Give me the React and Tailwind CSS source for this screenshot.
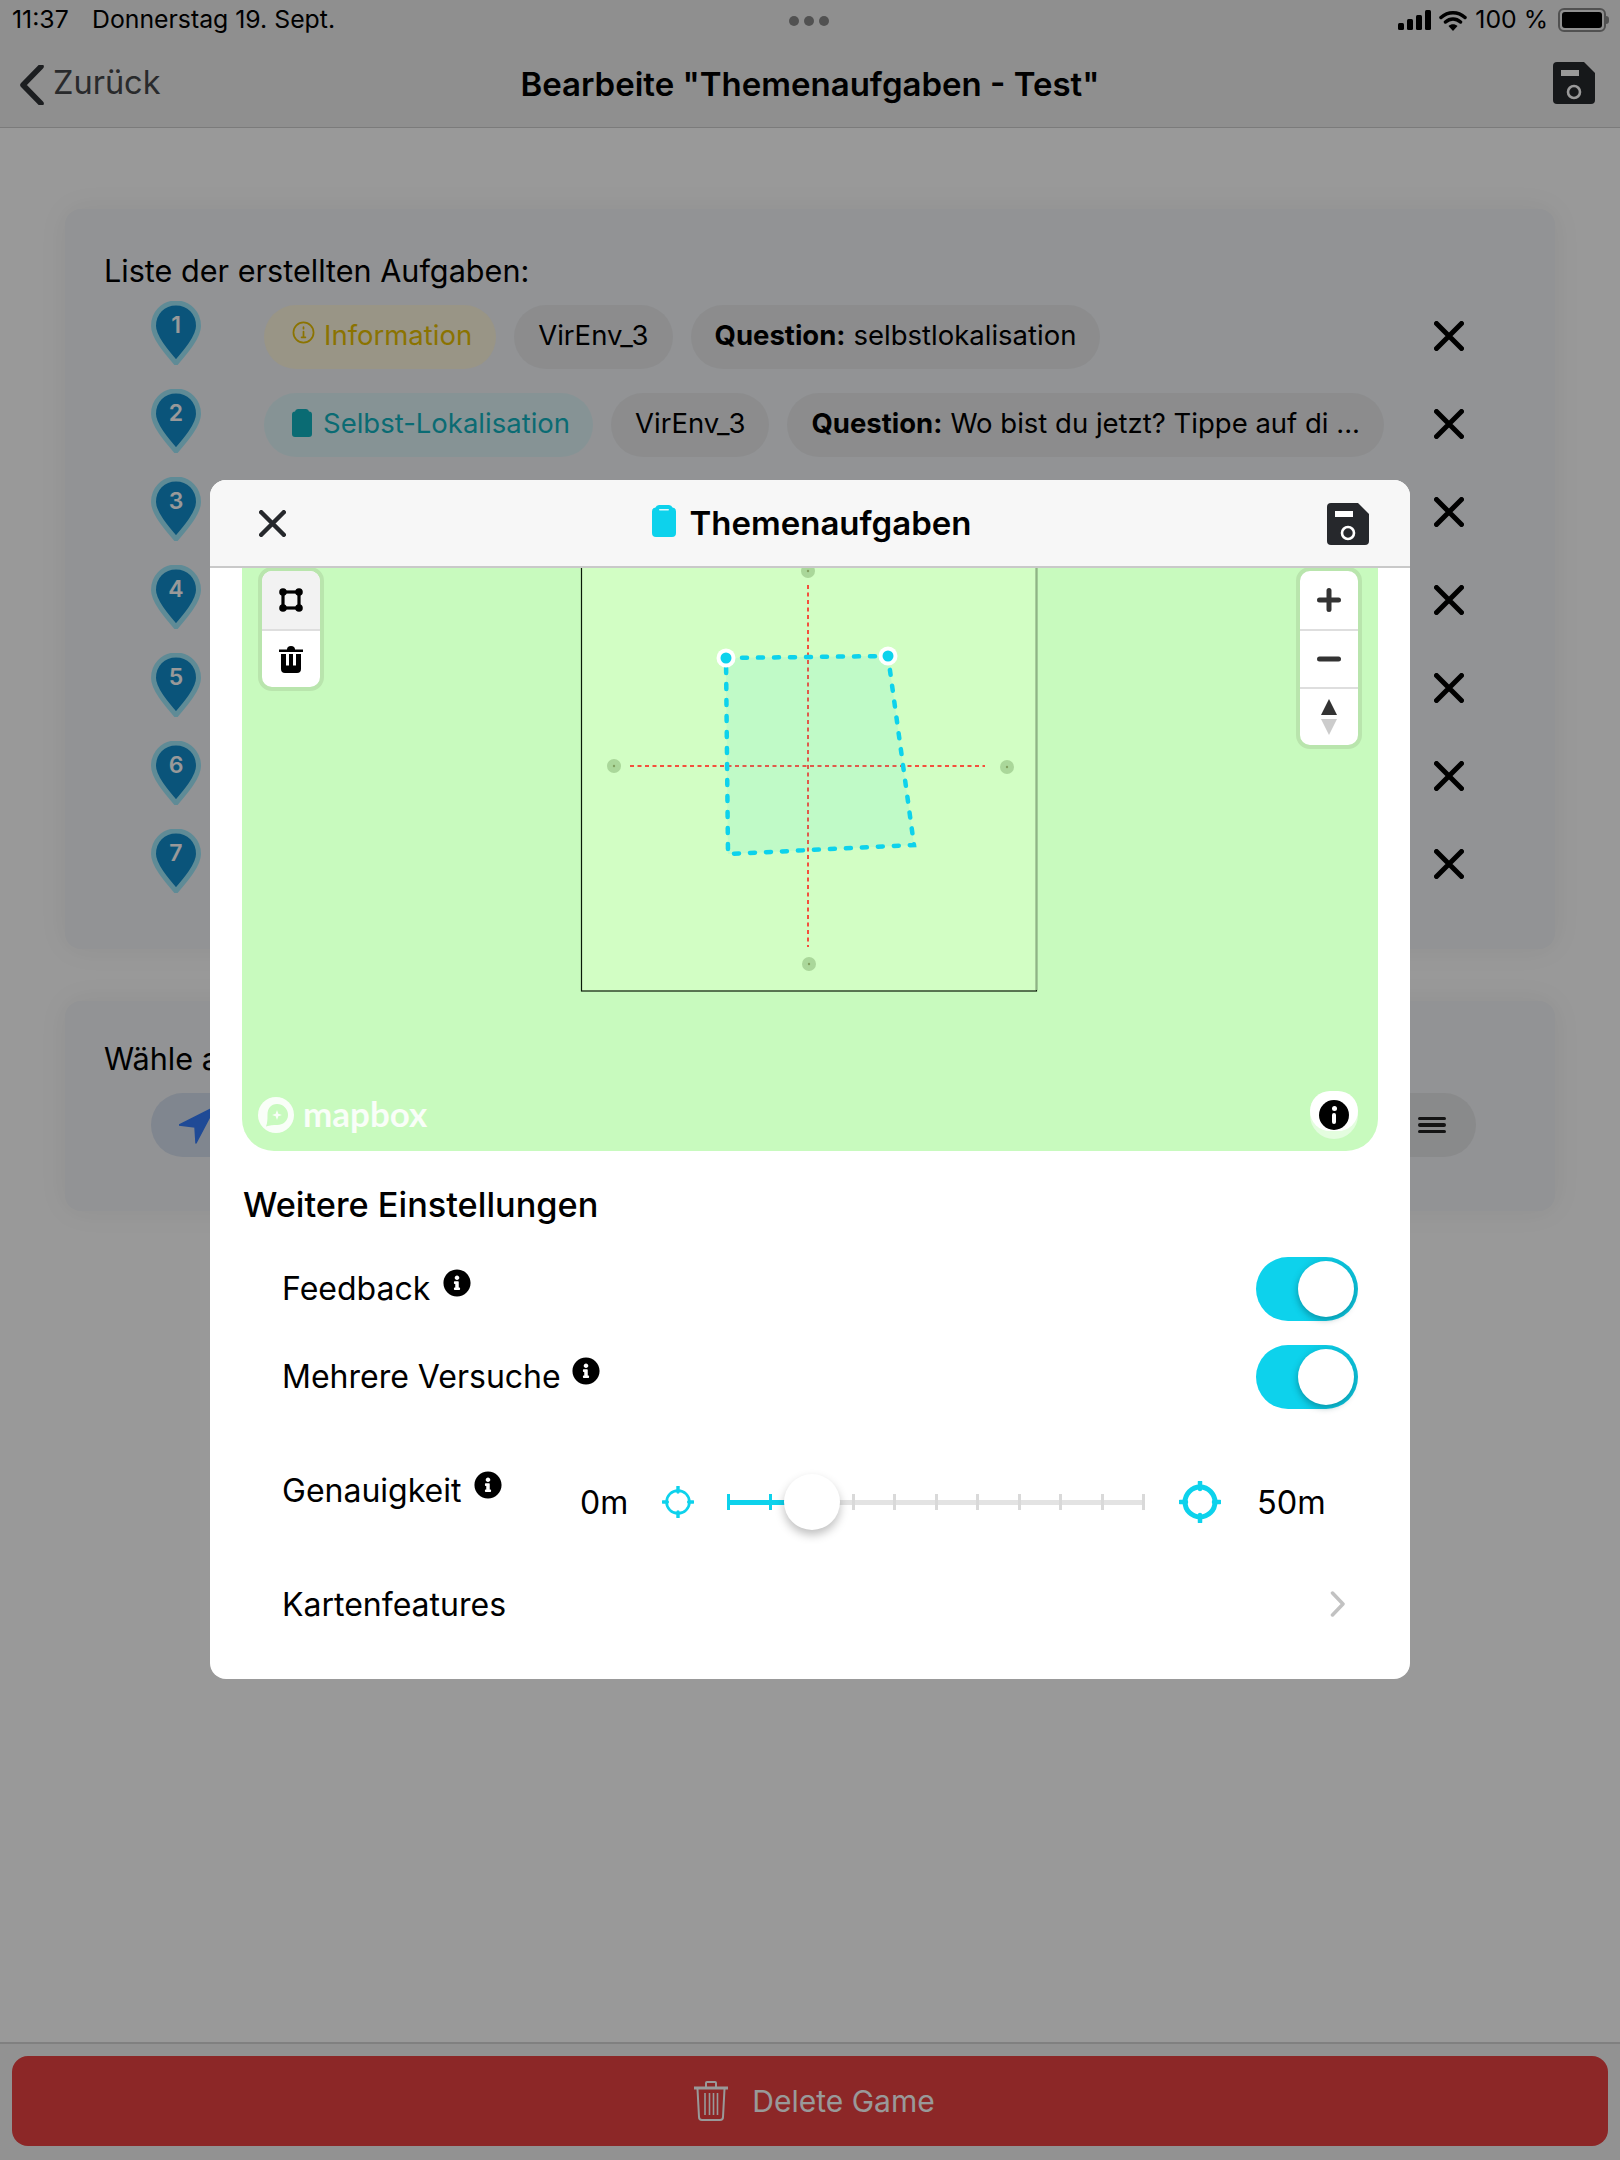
import { FaInfoCircle } from "react-icons/fa"

const font = "font-['Inter',sans-serif]"

function SaveIcon({ className }) {
  return (
    <svg viewBox="0 0 42 42" className={className}>
      <path d="M4 0H31L42 11V38a4 4 0 0 1-4 4H4a4 4 0 0 1-4-4V4a4 4 0 0 1 4-4Z" fill="currentColor" />
      <rect x="8" y="8" width="18" height="6" fill="#fff" />
      <circle cx="21" cy="30" r="6" fill="none" stroke="#fff" strokeWidth="2.6" />
    </svg>
  )
}

function ClipIcon({ color }) {
  return (
    <svg viewBox="0 0 24 32" className="w-6 h-8">
      <path d="M7 0h10a4 4 0 0 1 3.500 2.500A4 4 0 0 1 24 6.500V28a4 4 0 0 1-4 4H4a4 4 0 0 1-4-4V6.500A4 4 0 0 1 3.500 2.500 4 4 0 0 1 7 0Z" fill={color} />
      <rect x="7" y="4" width="10" height="1.600" rx="0.800" fill="#fff" opacity="0.85" />
    </svg>
  )
}

function CloseIcon({ className, stroke = "currentColor" }) {
  return (
    <svg viewBox="0 0 30 30" className={className}>
      <path d="M2.500 2.500L27.500 27.500M27.500 2.500L2.500 27.500" stroke={stroke} strokeWidth="5" strokeLinecap="round" />
    </svg>
  )
}

function Pin({ n }) {
  return (
    <div className="relative w-[50px] h-16 -mt-2 shrink-0">
      <svg viewBox="0 0 50 64" className="w-[50px] h-16">
        <path d="M25 2C12 2 2.500 12 2.500 25c0 11 13 26 22.500 37C34.500 51 47.500 36 47.500 25 47.500 12 38 2 25 2Z" fill="#118dcc" stroke="#9fe8fb" strokeWidth="5" strokeLinejoin="round" />
      </svg>
      <span className="absolute inset-x-0 top-[10px] text-center text-[23px] leading-7 font-semibold text-white">{n}</span>
    </div>
  )
}

function Chip({ children, className = "" }) {
  return (
    <div className={`h-16 rounded-full flex items-center text-[27.500px] whitespace-nowrap ${className}`}>
      {children}
    </div>
  )
}

function TaskRow({ n, children }) {
  return (
    <div className="h-[88px] flex items-center">
      <div className="ml-[86px] mr-[63px]">
        <Pin n={n} />
      </div>
      <div className="flex gap-[18px]">{children}</div>
      <CloseIcon className="w-[30px] h-[30px] ml-auto mr-[91px] -mt-[3px]" stroke="#000" />
    </div>
  )
}

function Toggle() {
  return (
    <div className="relative w-[102px] h-16 rounded-full bg-[linear-gradient(90deg,#0dd2ec_45%,#0cbcd4)]">
      <div className="absolute right-1 top-1 w-14 h-14 rounded-full bg-white shadow-[-1px_3px_6px_rgba(0,60,70,0.35)]" />
    </div>
  )
}

function Target({ size, weight }) {
  return (
    <svg viewBox="0 0 42 42" style={{ width: size, height: size }}>
      <circle cx="21" cy="21" r="15" fill="none" stroke="#0dd2ec" strokeWidth={weight} />
      <path d="M21 1V8M21 34V41M1 21H7M35 21H41" stroke="#0dd2ec" strokeWidth="4.500" strokeLinecap="round" />
    </svg>
  )
}

function SettingRow({ label, mt, gap }) {
  return (
    <div className={`h-16 flex items-center pl-[72px] pr-[52px] ${mt}`}>
      <span className="text-[32px]">{label}</span>
      <FaInfoCircle className={`w-[28px] h-[28px] -mt-[12px] text-black ${gap}`} />
      <div className="ml-auto">
        <Toggle />
      </div>
    </div>
  )
}

function MapControl({ className, children }) {
  return (
    <div className={`absolute top-[-1px] w-[66px] rounded-[14px] border-4 border-[#b9e5ad] bg-white overflow-hidden flex flex-col ${className}`}>
      {children}
    </div>
  )
}

function ControlButton({ children, className = "" }) {
  return <div className={`h-[58px] first:h-[60px] last:h-[56px] flex items-center justify-center border-b-2 border-[#dedede] last:border-b-0 ${className}`}>{children}</div>
}

function MapView() {
  return (
    <div className="relative mx-8 h-[583px] rounded-b-[32px] overflow-hidden bg-[#c8fabe]">
      <svg viewBox="242 568 1136 583" className="absolute inset-0 w-full h-full">
        <rect x="581.500" y="560" width="455" height="431" fill="#d2fec4" stroke="#0a1a08" strokeWidth="1.200" />
        <path d="M1036.500 568V990" stroke="#8fb486" strokeWidth="2" />
        <g fill="#aad79a">
          <circle cx="808" cy="571" r="7" />
          <circle cx="614" cy="766" r="7" />
          <circle cx="1007" cy="767" r="7" />
          <circle cx="809" cy="964" r="7" />
        </g>
        <g fill="#80a060">
          <circle cx="808" cy="571" r="1.200" />
          <circle cx="614" cy="766" r="1.200" />
          <circle cx="1007" cy="767" r="1.200" />
          <circle cx="809" cy="964" r="1.200" />
        </g>
        <path d="M630 766H985M808 585V947" stroke="#f4503c" strokeWidth="2" strokeDasharray="4 3.500" />
        <path d="M726 658L888 656L914 845L728 854Z" fill="#0dd2ec" fillOpacity="0.09" />
        <path d="M726 658L888 656L914 845L728 854Z" fill="none" stroke="#0dd2ec" strokeWidth="4.500" strokeDasharray="5 11" strokeLinecap="round" />
        <circle cx="726" cy="658" r="9.500" fill="#fff" />
        <circle cx="726" cy="658" r="5.500" fill="#0dd2ec" />
        <circle cx="888" cy="656" r="9.500" fill="#fff" />
        <circle cx="888" cy="656" r="5.500" fill="#0dd2ec" />
      </svg>

      <MapControl className="left-4">
        <ControlButton className="bg-[#f2f2f2]">
          <svg viewBox="0 0 24 24" className="w-6 h-6">
            <rect x="4" y="4" width="16" height="16" fill="none" stroke="#000" strokeWidth="3.200" />
            <circle cx="4" cy="4" r="3.800" />
            <circle cx="20" cy="4" r="3.800" />
            <circle cx="4" cy="20" r="3.800" />
            <circle cx="20" cy="20" r="3.800" />
          </svg>
        </ControlButton>
        <ControlButton>
          <svg viewBox="0 0 24 28" className="w-6 h-7">
            <path d="M0 4.500H24V7H0ZM8 4.500a4 3.500 0 0 1 8 0Z" />
            <path d="M2 9H22V24a4 4 0 0 1-4 4H6a4 4 0 0 1-4-4ZM7 9V20.500H10V9ZM14 9V20.500H17V9Z" fillRule="evenodd" />
          </svg>
        </ControlButton>
      </MapControl>

      <MapControl className="right-4">
        <ControlButton>
          <svg viewBox="0 0 24 24" className="w-6 h-6">
            <path d="M2.500 12H21.500M12 2.500V21.500" stroke="#333" strokeWidth="5" strokeLinecap="round" />
          </svg>
        </ControlButton>
        <ControlButton>
          <svg viewBox="0 0 24 24" className="w-6 h-6">
            <path d="M2.500 12H21.500" stroke="#333" strokeWidth="5" strokeLinecap="round" />
          </svg>
        </ControlButton>
        <ControlButton>
          <svg viewBox="0 0 16 36" className="w-4 h-9">
            <path d="M8 0L16 16H0Z" fill="#333" />
            <path d="M8 36L16 20H0Z" fill="#ccc" />
          </svg>
        </ControlButton>
      </MapControl>

      <div className="absolute left-4 bottom-[18px] flex items-center gap-[9px] text-white opacity-90">
        <svg viewBox="0 0 36 36" className="w-9 h-9">
          <circle cx="18" cy="18" r="18" fill="#fff" />
          <path d="M19 7a11 11 0 0 1 11 11c0 6-5 10-11 10-3.500 0-7 0-11 1.500 1.500-4 1.500-7 1.500-11.500C9.500 11 13 7 19 7Z" fill="#c8fabe" />
          <path d="M19 13l1.300 3.700L24 18l-3.700 1.300L19 23l-1.300-3.700L14 18l3.700-1.300Z" fill="#fff" />
        </svg>
        <span className="text-[35px] leading-9 font-bold font-['Lato',sans-serif] -mt-1">mapbox</span>
      </div>

      <div className="absolute right-5 bottom-3 w-12 h-12 rounded-full bg-white/50">
        <div className="w-12 h-10 rounded-full bg-white flex justify-center pt-[9px]">
          <div className="w-[30px] h-[30px] shrink-0 rounded-full bg-black flex flex-col items-center justify-center gap-[2px]">
            <div className="w-[5px] h-[5px] rounded-full bg-white" />
            <div className="w-1 h-[11px] rounded-full bg-white" />
          </div>
        </div>
      </div>
    </div>
  )
}

function AccuracyRow() {
  const ticks = [0, 1, 2, 3, 4, 5, 6, 7, 8, 9, 10]
  return (
    <div className="h-16 mt-[61px] flex items-center pl-[72px]">
      <div className="w-[298px] flex items-center -mt-[22px]">
        <span className="text-[32px]">Genauigkeit</span>
        <FaInfoCircle className="w-[28px] h-[28px] ml-[13px] -mt-[12px] text-black" />
      </div>
      <span className="w-[82px] mt-[2px] text-[32px]">0m</span>
      <Target size={32} weight={3.500} />
      <div className="relative w-[418px] h-4 ml-[33px] flex items-center justify-between">
        <div className="absolute inset-x-0 top-[5.500px] h-[5px] bg-[#e3e3e3]" />
        <div className="absolute left-0 w-[85px] top-[5.500px] h-[5px] bg-[#0dd2ec]" />
        {ticks.map((t) => (
          <div key={t} className={`relative w-[3px] h-[16px] ${t < 2 ? "bg-[#0dd2ec]" : "bg-[#d9d9d9]"}`} />
        ))}
        <div className="absolute left-[57px] -top-5 w-14 h-14 rounded-full bg-white shadow-[0_5px_10px_rgba(0,0,0,0.25)]" />
      </div>
      <div className="ml-[34px]">
        <Target size={42} weight={5} />
      </div>
      <span className="ml-[36px] mt-[2px] text-[32.500px]">50m</span>
    </div>
  )
}

function Modal() {
  return (
    <div className="w-[1200px] h-[1199px] rounded-2xl bg-white overflow-hidden text-black">
      <div className="relative h-[88px] bg-[#f7f7f7] border-b-2 border-[#c9c9c9] flex items-center justify-center">
        <CloseIcon className="absolute left-[49px] top-[30px] w-[27px] h-[27px] text-[#26282c]" />
        <div className="-mt-[4px] ml-[3px] flex">
          <ClipIcon color="#0dd2ec" />
        </div>
        <span className="ml-[14px] mt-[2px] text-[33px] font-semibold">Themenaufgaben</span>
        <SaveIcon className="absolute right-[41px] top-[23px] w-[42px] h-[42px] text-[#26282c]" />
      </div>
      <MapView />
      <div className="mt-[33px] pl-[33px] h-[42px] flex items-center text-[34.300px] font-[450]">Weitere Einstellungen</div>
      <SettingRow label="Feedback" mt="mt-[31px]" gap="ml-[13px]" />
      <SettingRow label="Mehrere Versuche" mt="mt-6" gap="ml-[11px]" />
      <AccuracyRow />
      <div className="h-16 mt-[38px] flex items-center justify-between pl-[72px] pr-[64px]">
        <span className="text-[32px] mt-[1px]">Kartenfeatures</span>
        <svg viewBox="0 0 16 26" className="w-4 h-[26px]">
          <path d="M2.500 2L13 13L2.500 24" fill="none" stroke="#c2c2c2" strokeWidth="3.500" strokeLinecap="round" strokeLinejoin="round" />
        </svg>
      </div>
    </div>
  )
}

export default function App() {
  return (
    <div className={`relative w-[1620px] h-[2160px] overflow-hidden flex flex-col bg-white text-black ${font}`}>
      <div className="h-10 shrink-0 flex items-center pl-3 pr-[11px] bg-[#eeeeee] text-[24.800px] relative">
        <span className="w-[60px]">11:37</span>
        <span className="ml-5">Donnerstag 19. Sept.</span>
        <div className="absolute left-[789px] top-4 flex gap-[5px]">
          <div className="w-[10px] h-[10px] rounded-full bg-[#888]" />
          <div className="w-[10px] h-[10px] rounded-full bg-[#888]" />
          <div className="w-[10px] h-[10px] rounded-full bg-[#888]" />
        </div>
        <div className="ml-auto flex items-center gap-[8px]">
          <svg viewBox="0 0 33 20" className="w-[33px] h-5">
            <rect x="0" y="13" width="6" height="7" rx="1.500" />
            <rect x="9" y="9" width="6" height="11" rx="1.500" />
            <rect x="18" y="5" width="6" height="15" rx="1.500" />
            <rect x="27" y="0" width="6" height="20" rx="1.500" />
          </svg>
          <svg viewBox="0 0 28 21" className="w-7 h-[21px]">
            <path d="M2 7.500C9 1 19 1 26 7.500M6.500 12C11 8 17 8 21.500 12" fill="none" stroke="#000" strokeWidth="3.500" strokeLinecap="round" />
            <path d="M14 21L9.500 16C12 13.500 16 13.500 18.500 16Z" />
          </svg>
          <span>100 %</span>
          <div className="flex items-center ml-[2px]">
            <div className="w-12 h-6 rounded-[6px] border-2 border-[#888] p-[2px]">
              <div className="w-full h-full rounded-[3px] bg-black" />
            </div>
            <div className="w-[3px] h-2 rounded-r-full bg-[#888]" />
          </div>
        </div>
      </div>

      <div className="relative h-[88px] shrink-0 bg-[#eeeeee] border-b border-[#cdcdcd] flex items-center justify-center">
        <div className="absolute left-5 top-[22px] flex items-center text-[#45474a]">
          <svg viewBox="0 0 24 40" className="w-6 h-10">
            <path d="M21 1.500L3 20L21 38.500" fill="none" stroke="#303236" strokeWidth="5.500" strokeLinecap="round" strokeLinejoin="round" />
          </svg>
          <span className="ml-[9px] -mt-[3px] text-[32.500px]">Zurück</span>
        </div>
        <span className="mt-[2px] text-[33px] font-semibold">Bearbeite "Themenaufgaben - Test"</span>
        <SaveIcon className="absolute right-[25px] top-[22px] w-[42px] h-[42px] text-[#26282c]" />
      </div>

      <div className="flex-1 px-[65px] pt-[81px] bg-white">
        <div className="h-[740px] rounded-2xl bg-[#f3f5f8] pt-[42px] shadow-[0_0_30px_rgba(0,0,0,0.06)]">
          <div className="ml-[39px] h-[40px] mb-[2px] flex items-center text-[30.600px]">Liste der erstellten Aufgaben:</div>
          <TaskRow n={1}>
            <Chip className="pl-7 pr-[24px] bg-[#fff8e0] text-[#e8c000]">
              <svg viewBox="0 0 24 24" className="w-[23px] h-[23px] mr-[9px] -mt-[9px]" fill="none" stroke="#e8c000" strokeWidth="1.800">
                <circle cx="12" cy="12" r="10.500" />
                <path d="M12 6.500V8M12 11V17M10 17H14" strokeLinecap="round" />
              </svg>
              <span className="-mt-[2px]">Information</span>
            </Chip>
            <Chip className="px-6 bg-[#e9eaec]"><span className="-mt-[2px]">VirEnv_3</span></Chip>
            <Chip className="px-6 bg-[#e9eaec]">
              <b className="font-bold -mt-[2px]">Question:</b>
              <span className="ml-2 -mt-[2px]">selbstlokalisation</span>
            </Chip>
          </TaskRow>
          <TaskRow n={2}>
            <Chip className="pl-7 pr-[23px] bg-[#e0f6f8] text-[#12b3c0]">
              <div className="mr-[11px] -mt-1 flex">
                <svg viewBox="0 0 20 28" className="w-5 h-7">
                  <path d="M6 0h8a3 3 0 0 1 3 2.500a3 3 0 0 1 3 3V25a3 3 0 0 1-3 3H3a3 3 0 0 1-3-3V5.500a3 3 0 0 1 3-3a3 3 0 0 1 3-2.500Z" fill="#12b3c0" />
                </svg>
              </div>
              <span className="-mt-[2px]">Selbst-Lokalisation</span>
            </Chip>
            <Chip className="px-6 bg-[#e9eaec]"><span className="-mt-[2px]">VirEnv_3</span></Chip>
            <Chip className="px-6 bg-[#e9eaec]">
              <b className="font-bold -mt-[2px]">Question:</b>
              <span className="ml-2 -mt-[2px]">Wo bist du jetzt? Tippe auf di ...</span>
            </Chip>
          </TaskRow>
          <TaskRow n={3} />
          <TaskRow n={4} />
          <TaskRow n={5} />
          <TaskRow n={6} />
          <TaskRow n={7} />
        </div>

        <div className="h-[210px] mt-[52px] rounded-2xl bg-[#f3f5f8] pt-[37px] shadow-[0_0_30px_rgba(0,0,0,0.06)]">
          <div className="ml-[39px] h-[42px] flex items-center text-[30.600px]">Wähle aus</div>
          <div className="mt-[13px] ml-[86px] mr-[79px] flex justify-between">
            <div className="w-[200px] h-16 rounded-full bg-[#d5dfee] flex items-center pl-7">
              <svg viewBox="0 0 36 40" className="w-9 h-10">
                <path d="M0 20L36 2L17 38L16 22Z" fill="#347cfa" stroke="#347cfa" strokeWidth="1.500" strokeLinejoin="round" />
              </svg>
            </div>
            <div className="w-[200px] h-16 rounded-full bg-[#e5e6e8] flex items-center justify-end pr-[30px]">
              <div className="flex flex-col gap-[3px]">
                <div className="w-7 h-[3.500px] rounded-full bg-[#222]" />
                <div className="w-7 h-[3.500px] rounded-full bg-[#222]" />
                <div className="w-7 h-[3.500px] rounded-full bg-[#222]" />
              </div>
            </div>
          </div>
        </div>
      </div>

      <div className="h-[118px] shrink-0 bg-[#f4f4f4] border-t-2 border-[#d5d5d5] pt-[12px] px-3">
        <div className="h-[90px] rounded-2xl bg-[#ea4141] flex items-center justify-center pl-[9px] text-white">
          <svg viewBox="0 0 34 40" className="w-[34px] h-10" fill="none" stroke="#fff" strokeWidth="2">
            <path d="M0 7H34" strokeWidth="3" />
            <path d="M12 6V2a1 1 0 0 1 1-1h8a1 1 0 0 1 1 1V6" />
            <path d="M3.500 8L5 36a3 3 0 0 0 3 3H26a3 3 0 0 0 3-3L30.500 8" />
            <path d="M11 12V34M15.500 12V34M19.500 12V34M23.500 12V34" strokeWidth="1.600" />
          </svg>
          <span className="ml-6 text-[30px]">Delete Game</span>
        </div>
      </div>

      <div className="absolute inset-0 bg-black/40 pt-[480px] flex justify-center items-start">
        <Modal />
      </div>
    </div>
  )
}
